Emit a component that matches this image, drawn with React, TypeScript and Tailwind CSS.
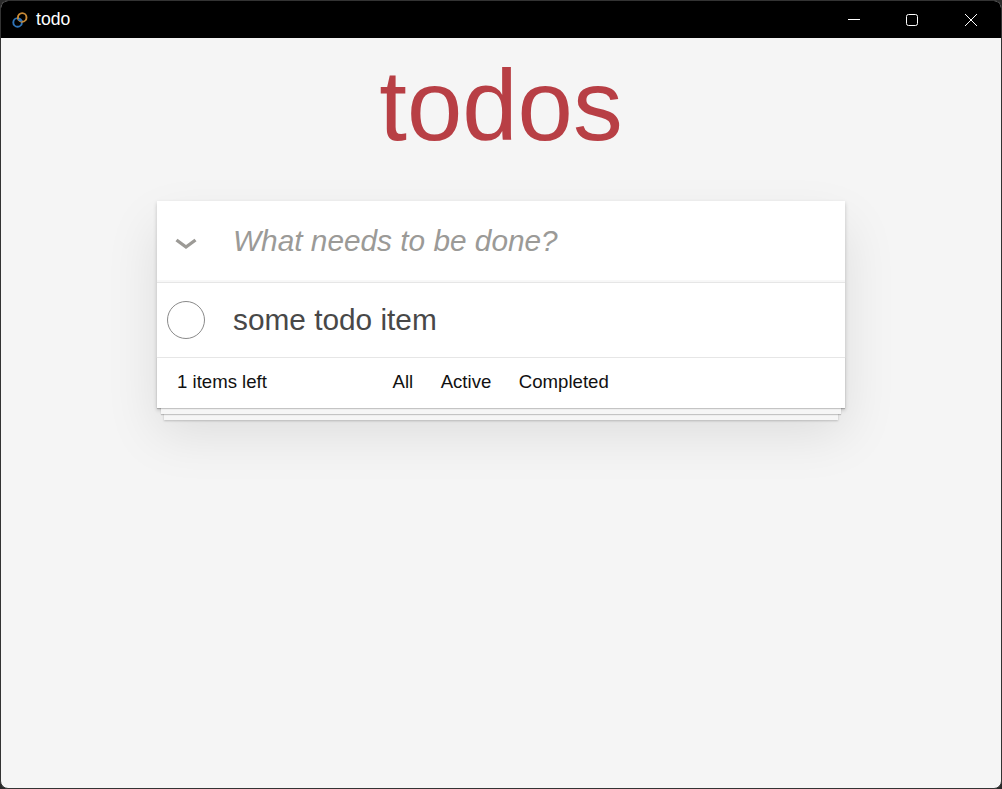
import React from "react";

function AppIcon() {
  return (
    <svg width="16" height="16" viewBox="0 0 16 16" fill="none" strokeWidth="1.9">
      <circle cx="5.6" cy="10.4" r="4.3" stroke="#2f74b8" />
      <circle cx="10.2" cy="5.4" r="4.3" stroke="#c98a35" />
      <path d="M6 7.9 A4 4 0 0 1 9.8 9.4" stroke="#2f74b8" />
    </svg>
  );
}

function WindowButtons() {
  return (
    <div className="flex h-full items-center pr-[1px]">
      <div className="flex h-full w-[58px] items-center justify-center">
        <svg width="12" height="12" viewBox="0 0 12 12" fill="none" stroke="#fff" strokeWidth="1">
          <path d="M0 5.5H12" />
        </svg>
      </div>
      <div className="flex h-full w-[58px] items-center justify-center">
        <svg width="12" height="12" viewBox="0 0 12 12" fill="none" stroke="#fff" strokeWidth="1">
          <rect x="0.5" y="0.5" width="11" height="11" rx="2" />
        </svg>
      </div>
      <div className="flex h-full w-[59px] items-center justify-center">
        <svg width="12" height="12" viewBox="0 0 12 12" fill="none" stroke="#fff" strokeWidth="1">
          <path d="M0 0L12 12M12 0L0 12" />
        </svg>
      </div>
    </div>
  );
}

export default function App() {
  return (
    <div className="h-[789px] w-[1002px] overflow-hidden bg-[#2a2a2a] font-['Liberation_Sans',Arial,sans-serif]">
      <div className="flex h-full flex-col overflow-hidden rounded-[8px] border border-[#333333] bg-[#f5f5f5]">
        <header className="flex h-[37px] shrink-0 items-center justify-between bg-black pl-[11px]">
          <div className="flex items-center gap-[8px]">
            <AppIcon />
            <span className="text-[17.6px] leading-none text-white">todo</span>
          </div>
          <WindowButtons />
        </header>

        <main className="flex flex-1 flex-col items-center">
          <h1 className="mt-[10px] text-center text-[99.5px] leading-[115px] font-normal text-[#b83f45]">todos</h1>

          <section className="relative mt-[38px] w-[688px] bg-white shadow-[0_2px_4px_0_rgba(0,0,0,0.2),0_25px_50px_0_rgba(0,0,0,0.1)]">
            <div className="flex h-[81px] items-center pb-[2px] shadow-[inset_0_-2px_1px_rgba(0,0,0,0.03)]">
              <div className="flex w-[76px] shrink-0 pl-[18px] pt-[6px]">
                <svg width="22" height="12" viewBox="0 0 22 12" fill="none" stroke="#9c9a96" strokeWidth="3.4">
                  <path d="M1.5 2L11 9L20.5 2" />
                </svg>
              </div>
              <span className="text-[29.8px] leading-none text-[#9b9a97] italic">What needs to be done?</span>
            </div>

            <div className="flex h-[75px] items-center border-t border-[#e6e6e6]">
              <div className="flex w-[76px] shrink-0 pl-[10px]">
                <div className="h-[38px] w-[38px] rounded-full border border-[#8a8a8a]" />
              </div>
              <span className="text-[29.8px] leading-none text-[#484848]">some todo item</span>
            </div>

            <footer className="relative flex h-[51px] items-center border-t border-[#e6e6e6] pb-[2px] pl-[20px] text-[18.6px] text-[#111111] shadow-[0_1px_1px_rgba(0,0,0,0.2),0_10px_0_-4px_#f6f6f6,0_11px_1px_-4px_rgba(0,0,0,0.2),0_19px_0_-7px_#f6f6f6,0_20px_2px_-7px_rgba(0,0,0,0.2)]">
              <span className="w-[215.5px]">1 items left</span>
              <nav className="flex gap-[27.5px]">
                <span>All</span>
                <span>Active</span>
                <span>Completed</span>
              </nav>
            </footer>
          </section>
        </main>
      </div>
    </div>
  );
}
